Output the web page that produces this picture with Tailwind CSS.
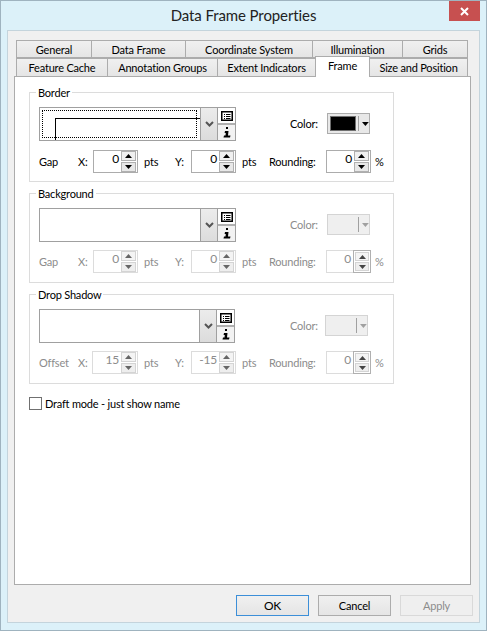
<!DOCTYPE html>
<html>
<head>
<meta charset="utf-8">
<script src="https://cdn.jsdelivr.net/npm/@tailwindcss/browser@4"></script>
</head>
<body class="m-0 overflow-hidden">
<div class="relative flex flex-col w-[487px] h-[631px] bg-[#dcf1f9] border border-[#9fb3bf] text-[11px] tracking-[-0.2px] leading-[15px] text-black font-['Lato',sans-serif]">
  <div class="h-[29px] shrink-0 flex items-center justify-center text-[15px] tracking-[-0.1px] text-[#222]">Data Frame Properties</div>
  <div class="absolute right-[6px] top-0 w-[31px] h-[20px] bg-[#c75050] flex items-center justify-center">
    <svg width="9" height="9" viewBox="0 0 9 9"><path d="M1 1L8 8M8 1L1 8" stroke="#fff" stroke-width="2"/></svg>
  </div>
  <div class="flex-1 flex flex-col mx-[6px] mb-[7px] bg-[#f0f0f0] border border-[#c4d4dc] pt-[9px] px-[6px]">
    <!-- tabs -->
    <div class="pl-[2px] h-[18px] flex shrink-0">
      <div class="w-[76px] bg-gradient-to-b from-[#f0f0f0] to-[#e5e5e5] border border-[#acacac] flex items-center justify-center">General</div>
      <div class="w-[95px] -ml-px bg-gradient-to-b from-[#f0f0f0] to-[#e5e5e5] border border-[#acacac] flex items-center justify-center">Data Frame</div>
      <div class="w-[128px] -ml-px bg-gradient-to-b from-[#f0f0f0] to-[#e5e5e5] border border-[#acacac] flex items-center justify-center">Coordinate System</div>
      <div class="w-[91px] -ml-px bg-gradient-to-b from-[#f0f0f0] to-[#e5e5e5] border border-[#acacac] flex items-center justify-center">Illumination</div>
      <div class="w-[66px] -ml-px bg-gradient-to-b from-[#f0f0f0] to-[#e5e5e5] border border-[#acacac] flex items-center justify-center">Grids</div>
    </div>
    <div class="pl-[2px] h-[18px] flex shrink-0 relative z-10">
      <div class="w-[92px] bg-gradient-to-b from-[#f0f0f0] to-[#e5e5e5] border border-[#acacac] border-b-0 flex items-center justify-center">Feature Cache</div>
      <div class="w-[111px] -ml-px bg-gradient-to-b from-[#f0f0f0] to-[#e5e5e5] border border-[#acacac] border-b-0 flex items-center justify-center">Annotation Groups</div>
      <div class="w-[99px] -ml-px bg-gradient-to-b from-[#f0f0f0] to-[#e5e5e5] border border-[#acacac] border-b-0 flex items-center justify-center">Extent Indicators</div>
      <div class="w-[55px] -ml-px -mt-[2px] h-[21px] bg-white border border-[#acacac] border-b-0 relative z-10 flex items-start justify-center pt-[1px]">Frame</div>
      <div class="w-[99px] -ml-px bg-gradient-to-b from-[#f0f0f0] to-[#e5e5e5] border border-[#acacac] border-b-0 flex items-center justify-center">Size and Position</div>
    </div>
    <!-- panel -->
    <div class="w-[457px] h-[509px] shrink-0 bg-white border border-[#acacac] pl-[14px] pt-[15px] flex flex-col">

      <!-- Border -->
      <div class="relative w-[365px] h-[90px] shrink-0 border border-[#dcdcdc] pl-[9px] pt-[14px]">
        <span class="absolute left-[6px] -top-[8px] bg-white px-[2px]">Border</span>
        <div class="flex items-start">
          <div class="w-[197px] h-[34px] flex border border-[#a0a0a0]">
            <div class="relative w-[160px] bg-white overflow-hidden">
              <div class="absolute left-[2px] top-[2px] w-[155px] h-[28px] border border-dotted border-black"></div>
              <div class="absolute left-[15px] top-[10px] w-[150px] h-[30px] border-l border-t border-black"></div>
            </div>
            <div class="w-[17px] bg-gradient-to-b from-[#ececec] to-[#dcdcdc] border-l border-[#a0a0a0] flex items-center justify-center">
              <svg width="9" height="6" viewBox="0 0 9 6"><path d="M1 1L4.5 4.5L8 1" fill="none" stroke="#555" stroke-width="2"/></svg>
            </div>
            <div class="w-[18px] flex flex-col border-l border-[#a0a0a0]">
              <div class="h-[17px] flex items-center justify-center border-b-2 border-[#b0b0b0] bg-white">
                <svg width="12" height="10" viewBox="0 0 12 10"><rect x="0.75" y="0.75" width="10.5" height="8.5" fill="#fff" stroke="#000" stroke-width="1.5"/><path d="M3 3.5H4M5 3.5H9.5M3 5.5H4M5 5.5H9.5M3 7.5H4M5 7.5H9.5" stroke="#000"/></svg>
              </div>
              <div class="flex-1 flex items-center justify-center bg-[#f2f2f2]">
                <svg width="8" height="11" viewBox="0 0 8 11"><path d="M3 0H5V2H3ZM2 4H5.5L5 8.5H7.5L7 10.5H0.5L1 8.5H2.5L2.8 6H1.6Z" fill="#000"/></svg>
              </div>
            </div>
          </div>
          <span class="w-[37px] ml-[54px] mt-[9px]">Color:</span>
          <div class="w-[43px] h-[21px] mt-[6px] flex items-center border border-[#acacac] bg-[#e8e8e8] pl-[2px]">
            <div class="w-[27px] h-[15px] bg-black border border-[#707070]"></div>
            <div class="w-px h-[15px] bg-[#a0a0a0] ml-[2px]"></div>
            <svg class="ml-[3px]" width="7" height="4" viewBox="0 0 7 4"><path d="M0 0H7L3.5 4Z" fill="#000"/></svg>
          </div>
        </div>
        <div class="flex items-center mt-[9px] h-[23px]">
          <span class="w-[39px]">Gap</span>
          <span class="w-[15px]">X:</span>
          <div class="w-[45px] h-[23px] flex border border-[#acacac] bg-white">
            <span class="flex-1 text-right pr-[2px] text-[12px]">0</span>
            <div class="w-[16px] flex flex-col gap-[1px] pr-[1px]">
              <div class="flex-1 bg-[#f0f0f0] border border-[#b0b0b0] flex items-center justify-center"><svg width="7" height="4" viewBox="0 0 7 4"><path d="M0 4H7L3.5 0Z" fill="#000"/></svg></div>
              <div class="flex-1 bg-[#e8e8e8] border border-[#b0b0b0] flex items-center justify-center"><svg width="7" height="4" viewBox="0 0 7 4"><path d="M0 0H7L3.5 4Z" fill="#000"/></svg></div>
            </div>
          </div>
          <span class="w-[31px] ml-[6px]">pts</span>
          <span class="w-[16px]">Y:</span>
          <div class="w-[45px] h-[23px] flex border border-[#acacac] bg-white">
            <span class="flex-1 text-right pr-[2px] text-[12px]">0</span>
            <div class="w-[16px] flex flex-col gap-[1px] pr-[1px]">
              <div class="flex-1 bg-[#f0f0f0] border border-[#b0b0b0] flex items-center justify-center"><svg width="7" height="4" viewBox="0 0 7 4"><path d="M0 4H7L3.5 0Z" fill="#000"/></svg></div>
              <div class="flex-1 bg-[#e8e8e8] border border-[#b0b0b0] flex items-center justify-center"><svg width="7" height="4" viewBox="0 0 7 4"><path d="M0 0H7L3.5 4Z" fill="#000"/></svg></div>
            </div>
          </div>
          <span class="w-[27px] ml-[6px]">pts</span>
          <span class="w-[57px]">Rounding:</span>
          <div class="w-[45px] h-[23px] flex border border-[#acacac] bg-white">
            <span class="flex-1 text-right pr-[2px] text-[12px]">0</span>
            <div class="w-[16px] flex flex-col gap-[1px] pr-[1px]">
              <div class="flex-1 bg-[#f0f0f0] border border-[#b0b0b0] flex items-center justify-center"><svg width="7" height="4" viewBox="0 0 7 4"><path d="M0 4H7L3.5 0Z" fill="#000"/></svg></div>
              <div class="flex-1 bg-[#e8e8e8] border border-[#b0b0b0] flex items-center justify-center"><svg width="7" height="4" viewBox="0 0 7 4"><path d="M0 0H7L3.5 4Z" fill="#000"/></svg></div>
            </div>
          </div>
          <span class="ml-[4px]">%</span>
        </div>
      </div>

      <!-- Background -->
      <div class="relative w-[365px] h-[90px] shrink-0 mt-[11px] border border-[#dcdcdc] pl-[9px] pt-[14px]">
        <span class="absolute left-[6px] -top-[8px] bg-white px-[2px]">Background</span>
        <div class="flex items-start">
          <div class="w-[197px] h-[34px] flex border border-[#a0a0a0]">
            <div class="w-[160px] bg-white"></div>
            <div class="w-[17px] bg-gradient-to-b from-[#ececec] to-[#dcdcdc] border-l border-[#a0a0a0] flex items-center justify-center">
              <svg width="9" height="6" viewBox="0 0 9 6"><path d="M1 1L4.5 4.5L8 1" fill="none" stroke="#555" stroke-width="2"/></svg>
            </div>
            <div class="w-[18px] flex flex-col border-l border-[#a0a0a0]">
              <div class="h-[17px] flex items-center justify-center border-b-2 border-[#b0b0b0] bg-white">
                <svg width="12" height="10" viewBox="0 0 12 10"><rect x="0.75" y="0.75" width="10.5" height="8.5" fill="#fff" stroke="#000" stroke-width="1.5"/><path d="M3 3.5H4M5 3.5H9.5M3 5.5H4M5 5.5H9.5M3 7.5H4M5 7.5H9.5" stroke="#000"/></svg>
              </div>
              <div class="flex-1 flex items-center justify-center bg-[#f2f2f2]">
                <svg width="8" height="11" viewBox="0 0 8 11"><path d="M3 0H5V2H3ZM2 4H5.5L5 8.5H7.5L7 10.5H0.5L1 8.5H2.5L2.8 6H1.6Z" fill="#000"/></svg>
              </div>
            </div>
          </div>
          <span class="w-[37px] ml-[54px] mt-[9px] text-[#8c8c8c]">Color:</span>
          <div class="w-[43px] h-[21px] mt-[6px] flex items-center border border-[#d4d4d4] bg-[#efefef] pl-[2px]">
            <div class="w-[27px] h-[15px]"></div>
            <div class="w-px h-[15px] bg-[#a0a0a0] ml-[2px]"></div>
            <svg class="ml-[3px]" width="7" height="4" viewBox="0 0 7 4"><path d="M0 0H7L3.5 4Z" fill="#a0a0a0"/></svg>
          </div>
        </div>
        <div class="flex items-center mt-[8px] h-[23px] text-[#8c8c8c]">
          <span class="w-[39px]">Gap</span>
          <span class="w-[15px]">X:</span>
          <div class="w-[45px] h-[23px] flex border border-[#dcdcdc] bg-white">
            <span class="flex-1 text-right pr-[2px] text-[12px]">0</span>
            <div class="w-[16px] flex flex-col gap-[1px] pr-[1px]">
              <div class="flex-1 bg-[#f4f4f4] border border-[#d4d4d4] flex items-center justify-center"><svg width="7" height="4" viewBox="0 0 7 4"><path d="M0 4H7L3.5 0Z" fill="#666"/></svg></div>
              <div class="flex-1 bg-[#eeeeee] border border-[#d4d4d4] flex items-center justify-center"><svg width="7" height="4" viewBox="0 0 7 4"><path d="M0 0H7L3.5 4Z" fill="#666"/></svg></div>
            </div>
          </div>
          <span class="w-[31px] ml-[6px]">pts</span>
          <span class="w-[16px]">Y:</span>
          <div class="w-[45px] h-[23px] flex border border-[#dcdcdc] bg-white">
            <span class="flex-1 text-right pr-[2px] text-[12px]">0</span>
            <div class="w-[16px] flex flex-col gap-[1px] pr-[1px]">
              <div class="flex-1 bg-[#f4f4f4] border border-[#d4d4d4] flex items-center justify-center"><svg width="7" height="4" viewBox="0 0 7 4"><path d="M0 4H7L3.5 0Z" fill="#666"/></svg></div>
              <div class="flex-1 bg-[#eeeeee] border border-[#d4d4d4] flex items-center justify-center"><svg width="7" height="4" viewBox="0 0 7 4"><path d="M0 0H7L3.5 4Z" fill="#666"/></svg></div>
            </div>
          </div>
          <span class="w-[27px] ml-[6px]">pts</span>
          <span class="w-[57px]">Rounding:</span>
          <div class="w-[45px] h-[23px] flex border border-[#dcdcdc] bg-white">
            <span class="flex-1 text-right pr-[2px] text-[12px]">0</span>
            <div class="w-[18px] flex flex-col gap-[1px] p-[1px] -my-px -mr-px border border-[#b0b0b0]">
              <div class="flex-1 bg-[#f4f4f4] border border-[#d4d4d4] flex items-center justify-center"><svg width="7" height="4" viewBox="0 0 7 4"><path d="M0 4H7L3.5 0Z" fill="#444"/></svg></div>
              <div class="flex-1 bg-[#eeeeee] border border-[#d4d4d4] flex items-center justify-center"><svg width="7" height="4" viewBox="0 0 7 4"><path d="M0 0H7L3.5 4Z" fill="#444"/></svg></div>
            </div>
          </div>
          <span class="ml-[4px]">%</span>
        </div>
      </div>

      <!-- Drop Shadow -->
      <div class="relative w-[365px] h-[90px] shrink-0 mt-[11px] border border-[#dcdcdc] pl-[9px] pt-[14px]">
        <span class="absolute left-[6px] -top-[8px] bg-white px-[2px]">Drop Shadow</span>
        <div class="flex items-start">
          <div class="w-[196px] h-[34px] flex border border-[#a0a0a0]">
            <div class="w-[159px] bg-white"></div>
            <div class="w-[17px] bg-gradient-to-b from-[#ececec] to-[#dcdcdc] border-l border-[#a0a0a0] flex items-center justify-center">
              <svg width="9" height="6" viewBox="0 0 9 6"><path d="M1 1L4.5 4.5L8 1" fill="none" stroke="#555" stroke-width="2"/></svg>
            </div>
            <div class="w-[18px] flex flex-col border-l border-[#a0a0a0]">
              <div class="h-[17px] flex items-center justify-center border-b-2 border-[#b0b0b0] bg-white">
                <svg width="12" height="10" viewBox="0 0 12 10"><rect x="0.75" y="0.75" width="10.5" height="8.5" fill="#fff" stroke="#000" stroke-width="1.5"/><path d="M3 3.5H4M5 3.5H9.5M3 5.5H4M5 5.5H9.5M3 7.5H4M5 7.5H9.5" stroke="#000"/></svg>
              </div>
              <div class="flex-1 flex items-center justify-center bg-[#f2f2f2]">
                <svg width="8" height="11" viewBox="0 0 8 11"><path d="M3 0H5V2H3ZM2 4H5.5L5 8.5H7.5L7 10.5H0.5L1 8.5H2.5L2.8 6H1.6Z" fill="#000"/></svg>
              </div>
            </div>
          </div>
          <span class="w-[35px] ml-[55px] mt-[9px] text-[#8c8c8c]">Color:</span>
          <div class="w-[43px] h-[21px] mt-[6px] flex items-center border border-[#d4d4d4] bg-[#efefef] pl-[2px]">
            <div class="w-[27px] h-[15px]"></div>
            <div class="w-px h-[15px] bg-[#a0a0a0] ml-[2px]"></div>
            <svg class="ml-[3px]" width="7" height="4" viewBox="0 0 7 4"><path d="M0 0H7L3.5 4Z" fill="#a0a0a0"/></svg>
          </div>
        </div>
        <div class="flex items-center mt-[8px] h-[23px] text-[#8c8c8c]">
          <span class="w-[39px]">Offset</span>
          <span class="w-[14px]">X:</span>
          <div class="w-[46px] h-[23px] flex border border-[#dcdcdc] bg-white">
            <span class="flex-1 text-right pr-[2px] text-[12px]">15</span>
            <div class="w-[16px] flex flex-col gap-[1px] pr-[1px]">
              <div class="flex-1 bg-[#f4f4f4] border border-[#d4d4d4] flex items-center justify-center"><svg width="7" height="4" viewBox="0 0 7 4"><path d="M0 4H7L3.5 0Z" fill="#666"/></svg></div>
              <div class="flex-1 bg-[#eeeeee] border border-[#d4d4d4] flex items-center justify-center"><svg width="7" height="4" viewBox="0 0 7 4"><path d="M0 0H7L3.5 4Z" fill="#666"/></svg></div>
            </div>
          </div>
          <span class="w-[31px] ml-[6px]">pts</span>
          <span class="w-[16px]">Y:</span>
          <div class="w-[45px] h-[23px] flex border border-[#dcdcdc] bg-white">
            <span class="flex-1 text-right pr-[2px] text-[12px]">-15</span>
            <div class="w-[16px] flex flex-col gap-[1px] pr-[1px]">
              <div class="flex-1 bg-[#f4f4f4] border border-[#d4d4d4] flex items-center justify-center"><svg width="7" height="4" viewBox="0 0 7 4"><path d="M0 4H7L3.5 0Z" fill="#666"/></svg></div>
              <div class="flex-1 bg-[#eeeeee] border border-[#d4d4d4] flex items-center justify-center"><svg width="7" height="4" viewBox="0 0 7 4"><path d="M0 0H7L3.5 4Z" fill="#666"/></svg></div>
            </div>
          </div>
          <span class="w-[27px] ml-[6px]">pts</span>
          <span class="w-[57px]">Rounding:</span>
          <div class="w-[45px] h-[23px] flex border border-[#dcdcdc] bg-white">
            <span class="flex-1 text-right pr-[2px] text-[12px]">0</span>
            <div class="w-[18px] flex flex-col gap-[1px] p-[1px] -my-px -mr-px border border-[#b0b0b0]">
              <div class="flex-1 bg-[#f4f4f4] border border-[#d4d4d4] flex items-center justify-center"><svg width="7" height="4" viewBox="0 0 7 4"><path d="M0 4H7L3.5 0Z" fill="#444"/></svg></div>
              <div class="flex-1 bg-[#eeeeee] border border-[#d4d4d4] flex items-center justify-center"><svg width="7" height="4" viewBox="0 0 7 4"><path d="M0 0H7L3.5 4Z" fill="#444"/></svg></div>
            </div>
          </div>
          <span class="ml-[4px]">%</span>
        </div>
      </div>

      <!-- Draft -->
      <div class="flex items-center mt-[13px] h-[13px]">
        <div class="w-[13px] h-[13px] border border-[#707070] bg-white"></div>
        <span class="ml-[3px]">Draft mode - just show name</span>
      </div>
    </div>
    <!-- buttons -->
    <div class="flex justify-end gap-[9px] mt-[10px]">
      <div class="w-[73px] h-[21px] border border-[#3c8fd8] bg-gradient-to-b from-[#f0f0f0] to-[#e5e5e5] flex items-center justify-center text-[12px]">OK</div>
      <div class="w-[73px] h-[21px] border border-[#acacac] bg-gradient-to-b from-[#f0f0f0] to-[#e5e5e5] flex items-center justify-center">Cancel</div>
      <div class="w-[73px] h-[21px] border border-[#d9d9d9] bg-[#efefef] text-[#8c8c8c] flex items-center justify-center">Apply</div>
    </div>
  </div>
</div>
</body>
</html>
